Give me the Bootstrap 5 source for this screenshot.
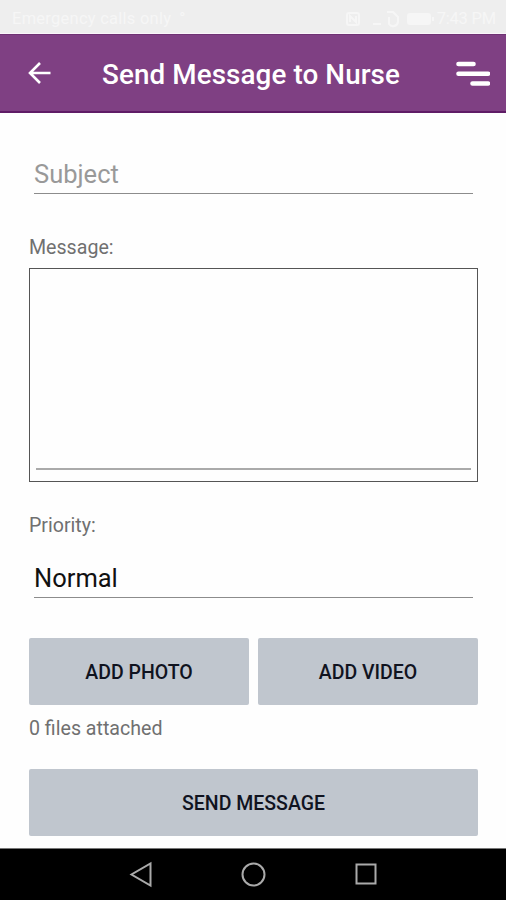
<!DOCTYPE html>
<html lang="en">
<head>
<meta charset="utf-8">
<meta name="viewport" content="width=device-width, initial-scale=1">
<title>Send Message to Nurse</title>
<link href="https://cdn.jsdelivr.net/npm/bootstrap@5.3.0/dist/css/bootstrap.min.css" rel="stylesheet">
<style>
  body { font-family: Roboto, "Liberation Sans", sans-serif; background: #fefefe; }
  .screen { height: 900px; overflow: hidden; }
  .status { height: 34px; background: #eee; border-bottom: 1px solid #faf5fa; color: #f6f6f6; font-size: 16.5px; line-height: 20px; padding: 9px 10px 0 12px; }
  .status .carrier { letter-spacing: .25px; }
  .status .clock { letter-spacing: -.2px; }
  .topbar { height: 79px; background: #7f4083; border-top: 1px solid #6f3274; border-bottom: 2px solid #5f1c66; padding: 0 16px 0 26px; }
  .topbar h1 { font-size: 27.8px; line-height: 32px; letter-spacing: .1px; padding: 4px 4px 0 0; }
  .form-area { padding: 42px 28px 0 29px; }
  .line-input { height: 39px; margin: 0 5px; width: 439px; font-size: 25.5px; line-height: 36px; border: 0; border-bottom: 1.5px solid #8c8c8c; border-radius: 0; padding: 0 0 1px; background: transparent; color: #111; }
  .line-input::placeholder { color: #999; opacity: 1; }
  .line-input.subject { margin-bottom: 42px; }
  .line-input.priority { margin-top: 21px; margin-bottom: 40px; }
  .caption { font-size: 19.6px; line-height: 24px; color: #707070; }
  .message-box { height: 214px; border: 1.5px solid #555; padding: 6px 6px 11px; margin: 8px 0 32px; }
  .message-box textarea { border: 0; border-bottom: 2px solid #aaa; border-radius: 0; resize: none; background: transparent; }
  .attach-row { gap: 9px; margin-bottom: 12px; }
  .attach-row .btn { flex: 1 1 0; }
  .btn-flat { height: 67px; border: 0; border-radius: 2px; background: #c0c6ce; color: #10131f; font-size: 19.5px; font-weight: 500; padding-top: 8px; }
  .send { margin-top: 28px; }
  .sysnav { height: 52px; background: #000; border-top: 1px solid #777; }
</style>
</head>
<body>
<div class="screen d-flex flex-column">
  <div class="status d-flex justify-content-between flex-shrink-0">
    <span class="d-flex gap-2"><span class="carrier">Emergency calls only</span><span>&deg;</span></span>
    <span class="d-flex">
      <svg width="94" height="20" viewBox="0 0 94 20" fill="none" stroke="#f6f6f6" stroke-width="2">
        <rect x="4" y="4" width="12" height="12" rx="2"/><path d="M7 13V7l6 6V7M30 15h8"/>
        <path d="M44 3h6l5 5v5a5 5 0 0 1-9 2V8"/><rect x="65" y="5" width="22" height="10" rx="2" fill="#f6f6f6"/><path d="M90 8v4"/>
      </svg>
      <span class="clock">7:43 PM</span>
    </span>
  </div>
  <header class="topbar d-flex align-items-center justify-content-between flex-shrink-0 text-white">
    <svg width="26" height="26" viewBox="0 0 26 26" fill="none" stroke="#fff" stroke-width="2.6"><path d="M24.500 13H3.500M14 3L4 13l10 10"/></svg>
    <h1 class="m-0 fw-medium text-nowrap">Send Message to Nurse</h1>
    <svg width="36" height="28" viewBox="0 0 36 28" fill="none" stroke="#fff" stroke-width="4.600" stroke-linecap="round"><path d="M4.500 5h15M4.500 14.700h29.500M18.500 24.500h15.500"/></svg>
  </header>
  <main class="form-area flex-grow-1 d-flex flex-column">
    <input class="form-control line-input subject" type="text" placeholder="Subject" aria-label="Subject">
    <label class="caption" for="msg">Message:</label>
    <div class="message-box"><textarea class="form-control h-100 p-0" id="msg"></textarea></div>
    <label class="caption" for="priority">Priority:</label>
    <input class="form-control line-input priority" id="priority" type="text" value="Normal">
    <div class="d-flex attach-row">
      <button class="btn btn-flat" type="button">ADD PHOTO</button>
      <button class="btn btn-flat" type="button">ADD VIDEO</button>
    </div>
    <div class="caption">0 files attached</div>
    <button class="btn btn-flat send w-100" type="submit">SEND MESSAGE</button>
  </main>
  <nav class="sysnav d-flex justify-content-center align-items-center flex-shrink-0">
    <svg width="250" height="28" viewBox="0 0 250 28" fill="none" stroke="#aaa" stroke-width="2"><path d="M22.500 2.500v22L3.500 13.500z"/><circle cx="125.500" cy="13.500" r="11"/><rect x="228.500" y="3.500" width="19" height="19"/></svg>
  </nav>
</div>
<script src="https://cdn.jsdelivr.net/npm/bootstrap@5.3.0/dist/js/bootstrap.bundle.min.js"></script>
</body>
</html>
